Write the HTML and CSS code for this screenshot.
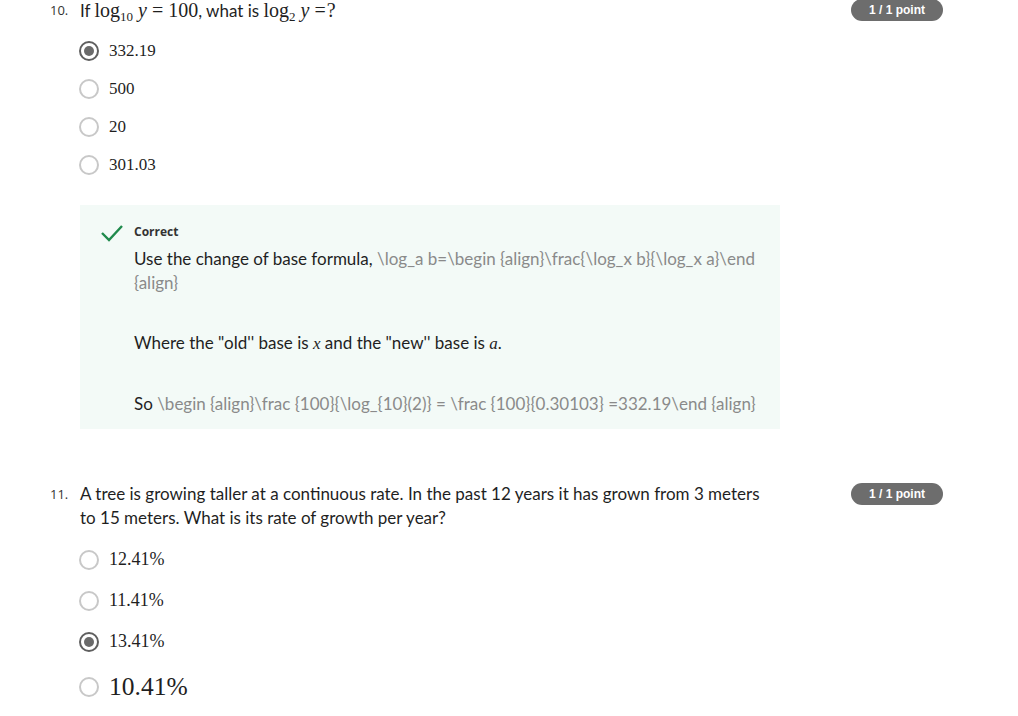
FILE: index.html
```html
<!DOCTYPE html>
<html>
<head>
<meta charset="utf-8">
<link rel="stylesheet" href="styles.css">
</head>
<body>
<div class="question q1">
  <div class="num">10.</div>
  <div class="qbody">
    <div class="prompt">If <span class="m pm">log<sub>10</sub> <i>y</i><span class="rel">=</span>100</span>, what is <span class="m pm">log<sub>2</sub> <i>y</i><span class="rel last">=</span>?</span></div>
    <div class="options">
      <div class="opt"><span class="radio on"></span><span class="m lab">332.19</span></div>
      <div class="opt"><span class="radio"></span><span class="m lab">500</span></div>
      <div class="opt"><span class="radio"></span><span class="m lab">20</span></div>
      <div class="opt"><span class="radio"></span><span class="m lab">301.03</span></div>
    </div>
    <div class="feedback">
      <svg class="check" width="24" height="18" viewBox="0 0 24 18"><path d="M2 9 L9 16 L22 2" fill="none" stroke="#1f8a4c" stroke-width="2.4"/></svg>
      <div class="fb">
        <div class="fbhead">Correct</div>
        <p>Use the change of base formula, <span class="tex">\log_a b=\begin {align}\frac{\log_x b}{\log_x a}\end {align}</span></p>
        <p>Where the "old'' base is <i class="m">x</i> and the "new'' base is <i class="m">a</i>.</p>
        <p>So <span class="tex">\begin {align}\frac {100}{\log_{10}(2)} = \frac {100}{0.30103} =332.19\end {align}</span></p>
      </div>
    </div>
  </div>
  <div class="badge">1 / 1 point</div>
</div>
<div class="question q2">
  <div class="num">11.</div>
  <div class="qbody">
    <div class="prompt tall">A tree is growing taller at a continuous rate. In the past 12 years it has grown from 3 meters to 15 meters. What is its rate of growth per year?</div>
    <div class="options o2">
      <div class="opt"><span class="radio"></span><span class="m lab">12.41%</span></div>
      <div class="opt"><span class="radio"></span><span class="m lab">11.41%</span></div>
      <div class="opt"><span class="radio on"></span><span class="m lab">13.41%</span></div>
      <div class="opt big"><span class="radio"></span><span class="m lab">10.41%</span></div>
    </div>
  </div>
  <div class="badge">1 / 1 point</div>
</div>
</body>
</html>
```
FILE: styles.css
```css
body {
  margin: 0;
  background: #fff;
  font-family: Lato, "Open Sans", sans-serif;
  color: #1f1f1f;
}
.question {
  display: flex;
  align-items: flex-start;
  padding-left: 50px;
}
.q2 { margin-top: 55px; }
.num {
  width: 30px;
  font-family: "Open Sans", sans-serif;
  font-size: 13px;
  line-height: 20px;
  color: #333;
}
.qbody {
  width: 700px;
}
.prompt {
  font-size: 17px;
  line-height: 20px;
  color: #1f1f1f;
}
.prompt.tall { line-height: 24px; margin-top: -2px; width: 690px; }
.m {
  font-family: "Liberation Serif", serif;
  font-size: 17px;
}
.pm { font-size: 20px; }
.rel { padding: 0 5px; }
.rel.last { padding-right: 1px; }
.m sub { font-size: 13px; vertical-align: -4px; line-height: 0; }
.options {
  display: flex;
  flex-direction: column;
  margin-top: 11px;
}
.opt {
  display: flex;
  align-items: center;
  height: 38px;
}
.o2 { margin-top: 9px; }
.o2 .opt { height: 41px; }
.o2 .lab { font-size: 18px; }
.o2 .opt.big { height: 49px; }
.o2 .opt.big .lab { font-size: 25.5px; }
.radio {
  width: 16px;
  height: 16px;
  border: 2px solid #c8c8c8;
  border-radius: 50%;
  margin-left: -1px;
  margin-right: 10px;
  display: flex;
  align-items: center;
  justify-content: center;
  flex: none;
}
.radio.on { border-color: #5f5f5f; }
.radio.on::after {
  content: "";
  width: 10px;
  height: 10px;
  border-radius: 50%;
  background: #6a6a6a;
}
.lab { color: #1f1f1f; }
.feedback {
  margin-top: 21px;
  background: #f3faf7;
  display: flex;
  padding: 18px 8px 13px 20px;
  min-height: 192px;
}
.check { flex: none; margin-top: 1px; margin-right: 10px; }
.fbhead {
  font-family: "Open Sans", sans-serif;
  font-weight: 700;
  font-size: 12px;
  line-height: 18px;
  color: #333;
}
.fb p {
  margin: 6px 0 36px;
  font-size: 17px;
  line-height: 24px;
  color: #1f1f1f;
}
.fb p:last-child { margin-bottom: 0; }
.fb p + p { margin-top: 0; }
.fb p .m { font-size: 17px; }
.tex { color: #8a8a8a; }
.badge {
  margin-left: 71px;
  width: 92px;
  height: 22px;
  border-radius: 11px;
  background: #6d6d6d;
  color: #fff;
  font-family: "Liberation Sans", Arial, sans-serif;
  font-weight: 700;
  font-size: 12px;
  line-height: 22px;
  text-align: center;
  margin-top: -1px;
}
```
